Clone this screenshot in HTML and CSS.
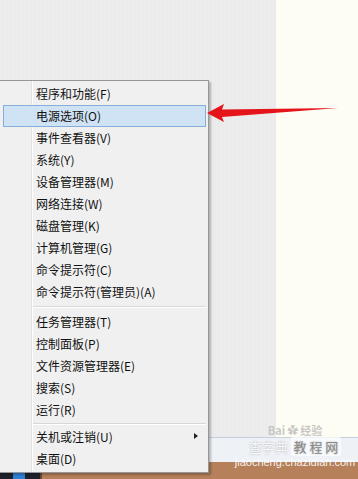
FILE: index.html
```html
<!DOCTYPE html>
<html lang="zh-CN">
<head>
  <meta charset="UTF-8" />
  <meta name="viewport" content="width=device-width, initial-scale=1.0" />
  <title>电源选项</title>
  <link rel="stylesheet" href="styles.css">
</head>
<body>
  <div class="screen">
    <div class="wall"></div>
    <div class="paper"></div>
    <div class="strip"></div>
    <div class="taskbar">
      <div class="start"><span class="start-icon"></span></div>
      <div class="task-items"></div>
    </div>
  </div>

  <ul class="menu">
    <li class="item">程序和功能(F)</li>
    <li class="item active">电源选项(O)</li>
    <li class="item">事件查看器(V)</li>
    <li class="item">系统(Y)</li>
    <li class="item">设备管理器(M)</li>
    <li class="item">网络连接(W)</li>
    <li class="item">磁盘管理(K)</li>
    <li class="item">计算机管理(G)</li>
    <li class="item">命令提示符(C)</li>
    <li class="item">命令提示符(管理员)(A)</li>
    <li class="sep sep-a"></li>
    <li class="item">任务管理器(T)</li>
    <li class="item">控制面板(P)</li>
    <li class="item">文件资源管理器(E)</li>
    <li class="item">搜索(S)</li>
    <li class="item">运行(R)</li>
    <li class="sep sep-b"></li>
    <li class="item has-sub">关机或注销(U)<span class="sub-arrow"></span></li>
    <li class="item">桌面(D)</li>
  </ul>

  <svg class="pointer" width="358" height="479" viewBox="0 0 358 479">
    <polygon points="207,113 224,104 222,109.5 338,108 222,117 224,122" fill="#e5141b" />
  </svg>

  <div class="watermark">
    <div class="wm-top">Bai<span class="paw">✿</span>经验</div>
    <div class="wm-mid">查字典 <span class="wm-box">教 程 网</span></div>
    <div class="wm-url">jiaocheng.chazidian.com</div>
  </div>
</body>
</html>
```

FILE: styles.css
```css
body {
  margin: 0;
  width: 358px;
  height: 479px;
  overflow: hidden;
  position: relative;
  font-family: "Noto Sans CJK SC", "Noto Sans", sans-serif;
  background-color: #ececec;
}
.screen {
  display: grid;
  grid-template-columns: 276px 1fr;
  grid-template-rows: 437px 25px 17px;
  height: 479px;
}
.wall {
  background-color: #ebebeb;
  background-image: repeating-linear-gradient(90deg, rgba(255,255,255,0.12) 0 1px, transparent 1px 4px);
}
.paper {
  background-color: #fefdf4;
}
.strip {
  grid-column: 1 / 3;
  background-color: #eef2f7;
  border-top: 1px solid #c3d0de;
}
.taskbar {
  grid-column: 1 / 3;
  display: flex;
  background-color: #b5805a;
}
.start {
  width: 40px;
  display: flex;
  align-items: flex-end;
  padding-left: 13px;
  box-sizing: border-box;
  background-color: #1e232b;
}
.start-icon {
  width: 12px;
  height: 7px;
  background-color: #2f7fd6;
}
.task-items {
  flex: 1;
  border-left: 2px solid #6b4a33;
}

.menu {
  position: absolute;
  left: -2px;
  top: 80px;
  width: 209px;
  margin: 0;
  padding: 2px 0 2px;
  list-style: none;
  background-color: #f0f0f0;
  border: 1px solid #979797;
  box-shadow: 2px 2px 2px rgba(0,0,0,0.25);
  background-image: linear-gradient(90deg, transparent 32px, #e2e2e2 32px, #e2e2e2 33px, #ffffff 33px, #ffffff 34px, transparent 34px);
}
.item {
  position: relative;
  height: 22px;
  line-height: 20px;
  padding-left: 32px;
  margin: 0 2px 0 4px;
  font-size: 12px;
  color: #111;
  white-space: nowrap;
  border: 1px solid transparent;
  box-sizing: border-box;
}
.item.active {
  background-color: #d0e3f5;
  border-color: #86aedb;
}
.sep {
  margin-left: 34px;
  margin-right: 2px;
  border-top: 1px solid #d7d7d7;
  border-bottom: 1px solid #ffffff;
}
.sep-a {
  margin-top: 3px;
  margin-bottom: 3px;
}
.sep-b {
  margin-top: 2px;
  margin-bottom: 1px;
}
.sub-arrow {
  position: absolute;
  right: 7px;
  top: 6px;
  border-left: 4px solid #222;
  border-top: 3.5px solid transparent;
  border-bottom: 3.5px solid transparent;
}

.pointer {
  position: absolute;
  left: 0;
  top: 0;
  pointer-events: none;
}

.watermark {
  position: absolute;
  left: 232px;
  top: 424px;
  width: 126px;
  display: flex;
  flex-direction: column;
  gap: 1px;
  font-family: "Noto Sans CJK SC", sans-serif;
  text-align: center;
}
.wm-top {
  font-size: 11px;
  line-height: 13px;
  color: rgba(190,190,190,0.85);
  font-weight: bold;
}
.paw {
  margin: 0 2px;
}
.wm-mid {
  font-size: 13px;
  line-height: 17px;
  color: rgba(255,255,255,0.9);
  text-shadow: 0 0 2px rgba(120,120,120,0.6);
}
.wm-box {
  background-color: rgba(255,255,255,0.7);
  color: #888;
  padding: 0 3px;
  border-radius: 2px;
}
.wm-url {
  font-family: "Liberation Sans", sans-serif;
  font-size: 11px;
  line-height: 13px;
  color: rgba(255,255,255,0.9);
}
```
